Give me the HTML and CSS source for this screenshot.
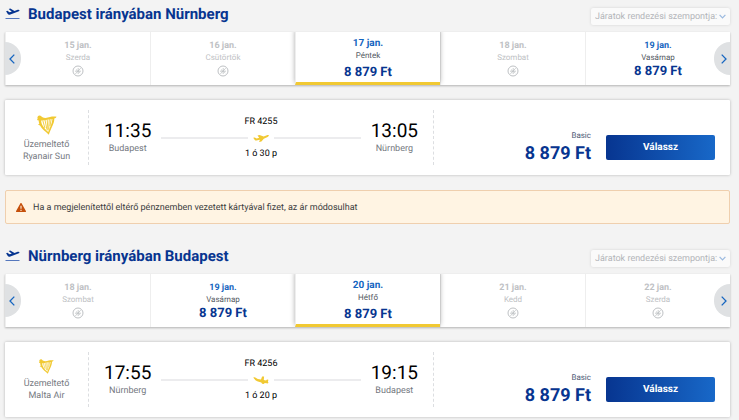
FILE: index.html
```html
<!DOCTYPE html>
<html lang="hu">
<head>
<meta charset="utf-8">
<meta name="viewport" content="width=device-width, initial-scale=1">
<title>Járatok</title>
<link rel="stylesheet" href="styles.css">
</head>
<body>
<svg class="sprite" aria-hidden="true">
  <symbol id="takeoff" viewBox="0 0 14 12">
    <path d="M0.6 3.2l1.300-.4 2.100 1.500 2.300-.6L3.200.9l1.600-.4 4.200 2.400 3.200-1.100c.9-.3 1.700 0 1.800.4.1.5-.4 1-1.200 1.300L4.200 6.700c-.8.2-1.500 0-1.900-.6z" fill="currentColor"/>
    <path d="M0 10.500h14" stroke="#5577bd" stroke-width="1"/>
  </symbol>
  <symbol id="no-flight" viewBox="0 0 12 12">
    <circle cx="6" cy="6" r="5" fill="none" stroke="currentColor"/>
    <path d="M3.400 8.900L8.700 3.200M6.200 3v6M3 6.200h6M4 4.500l1.500 1.400M6.600 6.400l1.600 1.500" fill="none" stroke="currentColor" stroke-width=".8"/>
  </symbol>
  <symbol id="prev" viewBox="0 0 6 10"><path d="M5.300.600L1 5l4.300 4.400" fill="none" stroke="currentColor" stroke-width="1.300"/></symbol>
  <symbol id="next" viewBox="0 0 6 10"><path d="M.700.600L5 5 .700 9.400" fill="none" stroke="currentColor" stroke-width="1.300"/></symbol>
  <symbol id="down" viewBox="0 0 7 5"><path d="M.600.800L3.500 3.800 6.400.800" fill="none" stroke="currentColor" stroke-width="1.200"/></symbol>
  <symbol id="plane" viewBox="0 0 16 8">
    <path d="M.2 3.700l1.500-.3 2 1.100 2.500-.7L4.500 1.500l2-.5 4.200 1.500 3.200-1.300c.9-.3 1.800-.1 2 .3.1.500-.6 1-1.300 1.400l-3.800 1.900L8.400 7.600l-2.400.4 1-2.200-3.600.6c-.7.1-1.200-.1-1.600-.5z" fill="currentColor"/>
  </symbol>
  <symbol id="plane-down" viewBox="0 0 16 8">
    <path d="M.2 1.600l1.600-.3 3 1.600 3.200.7L9.100.6l2-.2-.3 3.500 2.200.5 1-.9 1.400.2-.5 2.100.6.900c-.3.700-1.200.8-2 .6l-1.900-.2-.6.900-1.900-.2-.8-1.300L4.200 5.300C2.600 4.500 1 3 .2 1.600z" fill="currentColor"/>
  </symbol>
  <symbol id="harp" viewBox="0 0 20 20">
    <path d="M.6 3.800C0 2 1 .5 2.600.4c1.200 0 1.800.9 2.400 1.500C7.500 3.500 10 3 13 2.100c2.500-.8 4.800-.5 6.600-.4-.5 1-1.300 1.600-2.300 1.800.3 4.700-3.500 10-5.500 16.200C8.400 16.300 4.800 14 3 10.500l-2.200-1 1.500-.6C1.800 7.500 1.700 6.500 1.700 5.500L0 5zM4.200 5.500c-.2 3.600 2.600 7.500 7 11.500 1.500-4.500 4-8.500 4.200-13C11.500 4 8.500 5.700 4.200 5.500z" fill="currentColor" fill-rule="evenodd"/>
    <path d="M5.800 5.500l2.100 7.500M8 5l2 9.800M10.200 4.500l.8 11M12.300 4l-.6 10.500M14.200 3.800L13 11" stroke="currentColor" stroke-width=".9" fill="none"/>
  </symbol>
</svg>
<main class="page">
  <section class="journey">
    <header class="journey-head">
      <h2 class="title"><svg class="title-icon" aria-hidden="true"><use href="#takeoff"/></svg>Budapest irányában Nürnberg</h2>
      <div class="sort"><select class="sort-select" aria-label="Rendezés" disabled><option>Járatok rendezési szempontja:</option></select><svg class="sort-icon" aria-hidden="true"><use href="#down"/></svg></div>
    </header>
    <div class="carousel">
      <button class="arrow arrow-prev" aria-label="Előző"><svg class="chevron"><use href="#prev"/></svg></button>
      <button class="day" disabled><span class="date">15 jan.</span><span class="weekday">Szerda</span><svg class="none"><use href="#no-flight"/></svg></button>
      <button class="day" disabled><span class="date">16 jan.</span><span class="weekday">Csütörtök</span><svg class="none"><use href="#no-flight"/></svg></button>
      <button class="day selected"><span class="date">17 jan.</span><span class="weekday">Péntek</span><span class="fare">8 879 Ft</span></button>
      <button class="day" disabled><span class="date">18 jan.</span><span class="weekday">Szombat</span><svg class="none"><use href="#no-flight"/></svg></button>
      <button class="day"><span class="date">19 jan.</span><span class="weekday">Vasárnap</span><span class="fare">8 879 Ft</span></button>
      <button class="arrow arrow-next" aria-label="Következő"><svg class="chevron"><use href="#next"/></svg></button>
    </div>
    <article class="flight">
      <div class="operator"><svg class="harp" aria-hidden="true"><use href="#harp"/></svg><span>Üzemeltető</span><span>Ryanair Sun</span></div>
      <div class="route">
        <div class="stop"><time class="time">11:35</time><span class="city">Budapest</span></div>
        <div class="leg"><span>FR 4255</span><div class="track"><svg class="plane" aria-hidden="true"><use href="#plane"/></svg></div><span>1 ó 30 p</span></div>
        <div class="stop"><time class="time">13:05</time><span class="city">Nürnberg</span></div>
      </div>
      <div class="offer">
        <div class="price"><span class="plan">Basic</span><strong class="amount">8 879 Ft</strong></div>
        <button class="choose">Válassz</button>
      </div>
    </article>
  </section>
  <p class="notice"><svg class="warning" viewBox="0 0 10 9" aria-hidden="true"><path d="M4.300.4c.3-.5 1.100-.5 1.400 0L9.900 7.900c.3.500 0 1.100-.6 1.100H.7C.1 9-.2 8.400.1 7.900z" fill="#c5500c"/><path d="M5 2.700v3.100M5 6.800v1.100" stroke="#fff4e3" stroke-width="1.100"/></svg>Ha a megjelenítettől eltérő pénznemben vezetett kártyával fizet, az ár módosulhat</p>
  <section class="journey">
    <header class="journey-head">
      <h2 class="title"><svg class="title-icon" aria-hidden="true"><use href="#takeoff"/></svg>Nürnberg irányában Budapest</h2>
      <div class="sort"><select class="sort-select" aria-label="Rendezés" disabled><option>Járatok rendezési szempontja:</option></select><svg class="sort-icon" aria-hidden="true"><use href="#down"/></svg></div>
    </header>
    <div class="carousel">
      <button class="arrow arrow-prev" aria-label="Előző"><svg class="chevron"><use href="#prev"/></svg></button>
      <button class="day" disabled><span class="date">18 jan.</span><span class="weekday">Szombat</span><svg class="none"><use href="#no-flight"/></svg></button>
      <button class="day"><span class="date">19 jan.</span><span class="weekday">Vasárnap</span><span class="fare">8 879 Ft</span></button>
      <button class="day selected"><span class="date">20 jan.</span><span class="weekday">Hétfő</span><span class="fare">8 879 Ft</span></button>
      <button class="day" disabled><span class="date">21 jan.</span><span class="weekday">Kedd</span><svg class="none"><use href="#no-flight"/></svg></button>
      <button class="day" disabled><span class="date">22 jan.</span><span class="weekday">Szerda</span><svg class="none"><use href="#no-flight"/></svg></button>
      <button class="arrow arrow-next" aria-label="Következő"><svg class="chevron"><use href="#next"/></svg></button>
    </div>
    <article class="flight">
      <div class="operator"><svg class="harp harp-small" aria-hidden="true"><use href="#harp"/></svg><span>Üzemeltető</span><span>Malta Air</span></div>
      <div class="route">
        <div class="stop"><time class="time">17:55</time><span class="city">Nürnberg</span></div>
        <div class="leg"><span>FR 4256</span><div class="track"><svg class="plane" aria-hidden="true"><use href="#plane-down"/></svg></div><span>1 ó 20 p</span></div>
        <div class="stop"><time class="time">19:15</time><span class="city">Budapest</span></div>
      </div>
      <div class="offer">
        <div class="price"><span class="plan">Basic</span><strong class="amount">8 879 Ft</strong></div>
        <button class="choose">Válassz</button>
      </div>
    </article>
  </section>
</main>
</body>
</html>
```
FILE: styles.css
```css
* { box-sizing: border-box; }
body { margin: 0; background: #f3f3f3; font-family: Roboto, "Liberation Sans", sans-serif; font-size: 9px; line-height: 12px; color: #000; text-rendering: geometricPrecision; }
button, select { font: inherit; text-rendering: inherit; border: 0; margin: 0; padding: 0; }
svg { display: block; flex: none; }
.sprite { position: absolute; width: 0; height: 0; }
.page { padding: 0 9px 3px 5px; }

.journey-head { display: flex; justify-content: space-between; align-items: flex-end; height: 32px; padding-bottom: 7px; }
.title { display: flex; align-items: center; gap: 8px; margin: 0; font-size: 15px; font-weight: 700; line-height: 22px; color: #073590; }
.title-icon { width: 15px; height: 12px; }
.sort { display: flex; align-items: center; gap: 1px; height: 17px; padding: 0 4px; border-radius: 2px; background: #fafafa; box-shadow: 0 0 3px #0002; color: #9ab9df; }
.sort-select { appearance: none; background: none; color: #b3b5b9; opacity: 1; padding-top: 1px; line-height: 16px; }
.sort-icon { width: 7px; height: 5px; }

.carousel { position: relative; display: grid; grid-template-columns: repeat(5, 1fr); height: 53px; background: #fff; box-shadow: 0 1px 2px #0004; }
.day { display: flex; flex-direction: column; align-items: center; padding-top: 8px; background: #fff; border-left: 1px solid #eee; color: #54595f; }
.date { font-weight: 700; color: #1565c0; }
.weekday { font-size: 8px; }
.fare { font-size: 13px; font-weight: 700; line-height: 16px; color: #073590; }
.none { width: 12px; height: 12px; margin-top: 1px; }
.day:disabled, .day:disabled .date { color: #bec1c4; }
.day.selected { z-index: 1; padding-top: 6px; border-bottom: 3px solid #f1c933; box-shadow: 0 -2px 5px #0005; clip-path: inset(0 -6px 0 -6px); }
.selected .date { font-size: 10px; }
.selected .fare { margin-top: 3px; }
.arrow { position: absolute; z-index: 2; top: 10px; display: grid; place-items: center; width: 16px; height: 33px; background: #dfe1e3; color: #1565c0; }
.arrow-prev { left: 0; padding-right: 3px; border-radius: 0 17px 17px 0; }
.arrow-next { right: 0; padding-left: 3px; border-radius: 17px 0 0 17px; }
.chevron { width: 6px; height: 10px; }

.flight { display: flex; height: 75px; margin-top: 15px; padding: 10px 15px 10px 0; background: #fff; border-radius: 1px; box-shadow: 0 0 3px #0004; }
.operator { display: flex; flex-direction: column; align-items: center; justify-content: center; padding-top: 2px; width: 83px; color: #75797f; }
.harp { width: 20px; height: 20px; margin-bottom: 4px; color: #f1c933; }
.harp-small { width: 15px; height: 15px; }
.route { display: flex; flex: 0 0 346px; gap: 10px; padding: 0 15px; border: dashed #dcdee1; border-width: 0 1px; }
.stop { display: flex; flex-direction: column; align-items: center; padding-top: 10px; color: #75797f; }
.time { font-size: 19px; line-height: 22px; margin-bottom: 1px; color: #000; }
.leg { display: flex; flex: 1; flex-direction: column; align-items: center; padding-top: 6px; }
.track { display: flex; align-items: center; gap: 5px; align-self: stretch; height: 20px; }
.track::before, .track::after { content: ""; flex: 1; height: 2px; background: #ececee; }
.plane { width: 16px; height: 8px; color: #f1c933; }
.offer { display: flex; flex: 1; justify-content: flex-end; align-items: flex-end; gap: 15px; padding-bottom: 5px; }
.price { display: flex; flex-direction: column; align-items: flex-end; color: #073590; }
.plan { font-size: 8px; line-height: 12px; color: #4d5a75; }
.amount { font-size: 18px; font-weight: 700; line-height: 24px; height: 18px; }
.choose { width: 109px; height: 25px; border-radius: 2px; background: linear-gradient(90deg, #073590, #1868c8); color: #fff; font-size: 10px; font-weight: 700; }

.notice { display: flex; align-items: center; gap: 7px; height: 34px; margin: 15px 0 18px; padding: 1px 10px 0; border: 1px solid #efcfae; border-radius: 2px; background: #fff4e3; color: #3b3c3e; }
.warning { width: 10px; height: 9px; }
```
